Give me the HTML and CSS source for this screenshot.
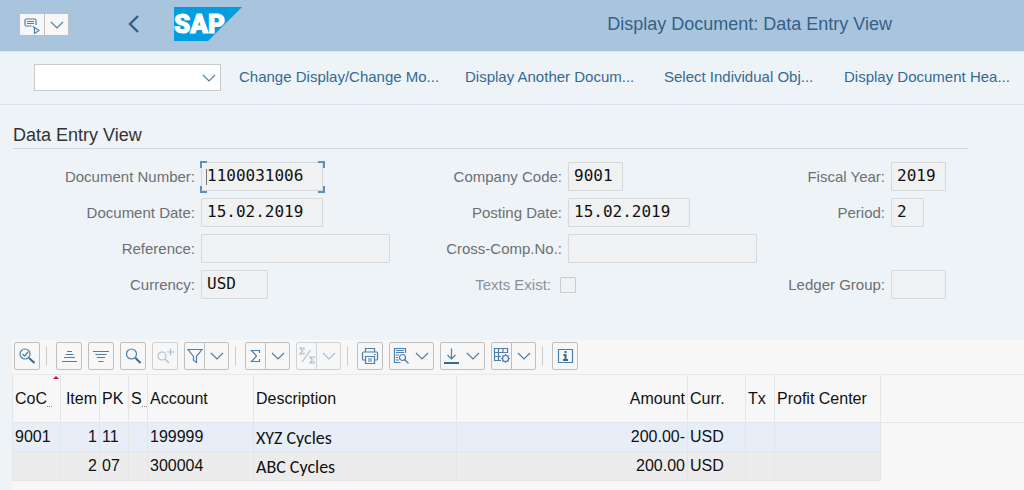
FILE: index.html
```html
<!DOCTYPE html>
<html lang="en">
<head>
<meta charset="utf-8">
<title>Display Document: Data Entry View</title>
<link rel="stylesheet" href="styles.css">
</head>
<body>
<svg class="defs" aria-hidden="true">
  <symbol id="chev" viewBox="0 0 14 8"><path d="M1 1l6 6 6-6"/></symbol>
</svg>

<header class="shell">
  <div class="split split-menu">
    <button type="button" aria-label="Menu">
      <svg width="20" height="20" viewBox="0 0 20 20"><path d="M9.500 11H4.500a1.500 1.500 0 0 1-1.500-1.500v-4A1.500 1.500 0 0 1 4.500 4h8A1.500 1.500 0 0 1 14 5.500v4.500M5 6.500h7M5 8.500h7M11 11l1.500 2.500M12.500 12.500v6l4.500-3z"/></svg>
    </button>
    <button type="button" aria-label="More"><svg width="14" height="8"><use href="#chev"/></svg></button>
  </div>
  <button type="button" class="back" aria-label="Back">
    <svg width="12" height="18" viewBox="0 0 12 18"><path d="M10 1L2 9l8 8"/></svg>
  </button>
  <svg class="logo" width="68" height="34" viewBox="0 0 68 34" role="img" aria-label="SAP">
    <path d="M0 0h68L34 34H0z"/>
    <text x="0" y="26">SAP</text>
  </svg>
  <h1>Display Document: Data Entry View</h1>
</header>

<nav class="actions">
  <div class="command">
    <select aria-label="Command"><option></option></select>
    <svg width="14" height="8"><use href="#chev"/></svg>
  </div>
  <div class="links">
    <button type="button">Change Display/Change Mo...</button>
    <button type="button">Display Another Docum...</button>
    <button type="button">Select Individual Obj...</button>
    <button type="button">Display Document Hea...</button>
  </div>
</nav>

<main>
  <section class="entry">
    <h2>Data Entry View</h2>
    <form class="fields">
      <label class="c1" for="docno">Document Number:</label>
      <span class="focus"><input id="docno" class="w-date" value="1100031006" readonly></span>
      <label for="cocode">Company Code:</label>
      <input id="cocode" class="w-code" value="9001" readonly>
      <label for="year">Fiscal Year:</label>
      <input id="year" class="w-code" value="2019" readonly>

      <label class="c1" for="docdate">Document Date:</label>
      <input id="docdate" class="w-date" value="15.02.2019" readonly>
      <label for="postdate">Posting Date:</label>
      <input id="postdate" class="w-date" value="15.02.2019" readonly>
      <label for="period">Period:</label>
      <input id="period" class="w-short" value="2" readonly>

      <label class="c1" for="ref">Reference:</label>
      <input id="ref" class="w-long" readonly>
      <label for="cross">Cross-Comp.No.:</label>
      <input id="cross" class="w-long" readonly>

      <label class="c1" for="curr">Currency:</label>
      <input id="curr" class="w-curr" value="USD" readonly>
      <label class="dim" for="texts">Texts Exist:</label>
      <input id="texts" type="checkbox" disabled>
      <label for="ledger">Ledger Group:</label>
      <input id="ledger" class="w-code" readonly>
    </form>
  </section>

  <section class="grid">
    <div class="tools" role="toolbar" aria-label="List tools">
      <button type="button" class="tool" aria-label="Details"><svg width="20" height="20" viewBox="0 0 20 20"><circle cx="8" cy="8" r="5"/><path d="M5.500 8l2 2 3.500-4"/><path class="thick" d="M12 12l5.500 5"/></svg></button>
      <span class="sep"></span>
      <button type="button" class="tool" aria-label="Sort ascending"><svg width="20" height="20" viewBox="0 0 20 20"><path d="M8 5.500h5M6.500 8.500h8M5 11.500h11M3 15.500h15"/></svg></button>
      <button type="button" class="tool" aria-label="Sort descending"><svg width="20" height="20" viewBox="0 0 20 20"><path d="M2 5.500h16M4.500 8.500h11M6 11.500h8M7.500 15.500h5"/></svg></button>
      <button type="button" class="tool" aria-label="Find"><svg width="20" height="20" viewBox="0 0 20 20"><circle cx="8.500" cy="8" r="5"/><path class="thick" d="M12.500 12l5 5"/></svg></button>
      <button type="button" class="tool off" aria-label="Find next" disabled><svg width="20" height="20" viewBox="0 0 20 20"><circle cx="7" cy="10" r="4"/><path d="M10 13l4 4M15.500 2.500v7M12 6h7"/></svg></button>
      <div class="split">
        <button type="button" aria-label="Filter"><svg width="18" height="20" viewBox="0 0 18 20"><path d="M2 3.500h14l-5.500 7v6l-3-2v-4z"/></svg></button>
        <button type="button" aria-label="Filter options"><svg width="14" height="8"><use href="#chev"/></svg></button>
      </div>
      <span class="sep"></span>
      <div class="split">
        <button type="button" aria-label="Total"><svg width="18" height="20" viewBox="0 0 18 20"><path d="M12.500 7V4.500h-8l5 5.500-5 5.500h8V13"/></svg></button>
        <button type="button" aria-label="Total options"><svg width="14" height="8"><use href="#chev"/></svg></button>
      </div>
      <div class="split off">
        <button type="button" aria-label="Subtotal" disabled><svg width="18" height="20" viewBox="0 0 18 20"><path d="M6 4V2H2l2.500 3L2 8h4V6.500M4 16L12.500 4M16 12.500V11h-4l2.500 3-2.500 3h4v-2"/></svg></button>
        <button type="button" aria-label="Subtotal options" disabled><svg width="14" height="8"><use href="#chev"/></svg></button>
      </div>
      <span class="sep"></span>
      <button type="button" class="tool" aria-label="Print"><svg width="20" height="20" viewBox="0 0 20 20"><path d="M5.500 6V2.500h9V6M5 14H3.500A1 1 0 0 1 2.500 13V7a1 1 0 0 1 1-1h13a1 1 0 0 1 1 1v6a1 1 0 0 1-1 1H15M5.500 10.500h9v7h-9zM8 13h4M8 15h4M14 8.500h1.500"/></svg></button>
      <div class="split joined">
        <button type="button" aria-label="Views"><svg width="18" height="20" viewBox="0 0 18 20"><path d="M14.500 7V2.500h-11v14h6M5 4.500h8M5 6.500h8M5 9h3M5 11.500h2M5 14h3"/><circle cx="11.500" cy="11.500" r="3"/><path d="M13.500 13.500l4 4"/></svg></button>
        <button type="button" aria-label="View options"><svg width="14" height="8"><use href="#chev"/></svg></button>
      </div>
      <div class="split joined">
        <button type="button" aria-label="Export"><svg width="18" height="20" viewBox="0 0 18 20"><path d="M9.500 2.500v10M5.500 9l4 4 4-4"/><path class="thick" d="M2 17h15"/></svg></button>
        <button type="button" aria-label="Export options"><svg width="14" height="8"><use href="#chev"/></svg></button>
      </div>
      <div class="split">
        <button type="button" aria-label="Layout"><svg width="18" height="20" viewBox="0 0 18 20"><path d="M8 14.500H1.500v-12h13V7M1.500 6.500h13M1.500 10.500H8M5.500 2.500v12M10 2.500v4"/><circle cx="12.500" cy="12.500" r="3"/><path d="M12.500 8v1.500M12.500 15.500V17M8 12.500h1.500M15.500 12.500H17M9.500 9.500l1 1M14.500 14.500l1 1M15.500 9.500l-1 1M10.500 14.500l-1 1"/></svg></button>
        <button type="button" aria-label="Layout options"><svg width="14" height="8"><use href="#chev"/></svg></button>
      </div>
      <span class="sep"></span>
      <button type="button" class="tool" aria-label="Information"><svg width="20" height="20" viewBox="0 0 20 20"><path d="M3.500 3.500h14v13h-14z"/><path class="thick" d="M9.500 6h2M8.500 9h2v5M8 14h5"/></svg></button>
    </div>

    <table>
      <colgroup>
        <col class="k-coc"><col class="k-item"><col class="k-pk"><col class="k-s"><col class="k-acc"><col class="k-desc"><col class="k-amt"><col class="k-cur"><col class="k-tx"><col class="k-pc"><col>
      </colgroup>
      <thead>
        <tr>
          <th class="sorted">CoC<span class="more"></span></th>
          <th class="num">Item</th>
          <th>PK</th>
          <th>S<span class="more"></span></th>
          <th>Account</th>
          <th>Description</th>
          <th class="num">Amount</th>
          <th>Curr.</th>
          <th>Tx</th>
          <th>Profit Center</th>
          <td class="rest"></td>
        </tr>
      </thead>
      <tbody>
        <tr class="first"><td>9001</td><td class="num">1</td><td>11</td><td></td><td>199999</td><td class="name">XYZ Cycles</td><td class="num">200.00-</td><td>USD</td><td></td><td></td><td class="rest"></td></tr>
        <tr class="second"><td></td><td class="num">2</td><td>07</td><td></td><td>300004</td><td class="name">ABC Cycles</td><td class="num">200.00</td><td>USD</td><td></td><td></td><td class="rest"></td></tr>
      </tbody>
    </table>
  </section>
</main>
</body>
</html>
```

FILE: styles.css
```css
* { box-sizing: border-box; }

body {
  margin: 0;
  min-height: 100vh;
  display: flex;
  flex-direction: column;
  background: #eef3f8;
  color: #111;
  font: 16px/20px "Liberation Sans", Arial, sans-serif;
}

.defs { display: none; }

svg {
  display: block;
  flex: none;
  fill: none;
  stroke: #4d7fab;
  stroke-width: 1.2;
}

button {
  padding: 0;
  border: 0;
  background: none;
  color: inherit;
  font: inherit;
}

h1, h2 { margin: 0; font-weight: 400; }

/* Shell bar */
.shell {
  display: flex;
  align-items: center;
  height: 52px;
  padding: 0 132px 4px 19px;
  background: #a9c5de;
  border-bottom: 1px solid #d8e6f2;
}

.back { margin-left: 59px; }
.back svg { stroke: #346187; stroke-width: 2.4; }

.logo { margin-left: 34px; }
.logo path { fill: #009de0; stroke: none; }
.logo text {
  fill: #fff;
  stroke: #fff;
  stroke-width: 1;
  font: 900 26px Roboto, sans-serif;
}

h1 {
  margin-left: auto;
  color: #346187;
  font-size: 18px;
  line-height: 24px;
}

/* Action bar */
.actions {
  display: flex;
  align-items: center;
  height: 53px;
  padding: 0 8px 2px 34px;
  border-bottom: 1px solid #dae7f2;
}

.command { position: relative; }
.command select {
  display: block;
  width: 187px;
  height: 27px;
  border: 1px solid #c8cacc;
  border-radius: 0;
  background: #fff;
  appearance: none;
}
.command svg {
  position: absolute;
  right: 5px;
  top: 10px;
  pointer-events: none;
}

.links {
  flex: 1;
  display: grid;
  grid-template-columns: 226fr 199fr 180fr 172fr;
  margin-left: 18px;
}
.links button {
  color: #346a94;
  font-size: 15px;
  text-align: left;
  white-space: nowrap;
}

/* Header data */
main { flex: 1; display: flex; flex-direction: column; }

.entry { padding: 18px 0 41px 13px; }

h2 {
  margin-right: 56px;
  padding-bottom: 1px;
  border-bottom: 1px solid #d3d6d9;
  color: #333;
  font-size: 18px;
  line-height: 24px;
}

.fields {
  display: grid;
  grid-template-columns: 182fr 190px 165fr 190px 121fr 56px;
  grid-auto-rows: 29px;
  gap: 7px 6px;
  align-items: center;
  margin: 13px 77px 0 0;
}
.fields label { color: #6d6f71; font-size: 15px; text-align: right; }
.fields .c1 { grid-column: 1; }
.fields .dim { color: #8d9195; padding-right: 11px; }

.fields input {
  height: 29px;
  margin: 0;
  padding: 0 5px 2px;
  border: 1px solid #d6d8da;
  border-radius: 1px;
  background: #f0f1f2;
  color: #111;
  font: 16px/20px "DejaVu Sans Mono", monospace;
}
.fields .w-date { width: 122px; }
.fields .w-code { width: 55px; }
.fields .w-short { width: 33px; }
.fields .w-long { width: 189px; }
.fields .w-curr { width: 67px; }
.fields input[type="checkbox"] {
  width: 16px;
  height: 16px;
  margin-left: -8px;
  padding: 0;
  border-color: #c9cbcd;
  appearance: none;
}

.focus { position: relative; justify-self: start; display: flex; }
.focus::before {
  content: "";
  position: absolute;
  inset: -1px -2px -2px -1px;
  --c: linear-gradient(#5b90bf, #5b90bf);
  background:
    var(--c) 0 0 / 7px 2px, var(--c) 0 0 / 2px 7px,
    var(--c) 100% 0 / 7px 2px, var(--c) 100% 0 / 2px 7px,
    var(--c) 0 100% / 7px 2px, var(--c) 0 100% / 2px 7px,
    var(--c) 100% 100% / 7px 2px, var(--c) 100% 100% / 2px 7px;
  background-repeat: no-repeat;
}
.focus::after {
  content: "";
  position: absolute;
  left: 5px;
  top: 7px;
  width: 1px;
  height: 16px;
  background: #777;
}

/* Item list */
.grid {
  flex: 1;
  margin-left: 12px;
  background: #f7f7f7;
}

.tools {
  display: flex;
  align-items: center;
  gap: 6px;
  height: 35px;
  padding: 0 2px 3px;
  border-bottom: 1px solid #e8e8e8;
}

.tool, .split {
  display: flex;
  height: 28px;
  border: 1px solid #bfbfbf;
  border-radius: 2px;
  background: #f7f7f7;
}
.tool { width: 26px; align-items: center; justify-content: center; }
.split { width: 45px; }
.split button {
  flex: 1;
  display: flex;
  align-items: center;
  justify-content: center;
}
.split button:first-child {
  flex: none;
  width: 20px;
  border-right: 1px solid #bfbfbf;
}
.split.joined button:first-child { border-right-color: transparent; }
.split.split-menu { width: 50px; height: 23px; border-radius: 1px; margin-top: 2px; }
.split.split-menu button:first-child { width: 25px; }

.thick { stroke: #346a94; stroke-width: 2; }
.off svg { stroke: #a9bfd3; }
.tool.off, .split.off { border-color: #d0d0d0; }
.split.off button:first-child { border-color: #d0d0d0; }

.sep { width: 4px; height: 20px; border-left: 1px solid #ccc; }

table {
  width: 100%;
  table-layout: fixed;
  border-collapse: separate;
  border-spacing: 0;
}
.k-coc { width: 49px; }
.k-item { width: 39px; }
.k-pk { width: 29px; }
.k-s { width: 19px; }
.k-acc { width: 106px; }
.k-desc { width: 203px; }
.k-amt { width: 231px; }
.k-cur { width: 58px; }
.k-tx { width: 29px; }
.k-pc { width: 106px; }

th, td {
  height: 29px;
  padding: 0 2px;
  border-right: 1px solid #e3e5e7;
  border-bottom: 1px solid #e3e5e7;
  text-align: left;
  font-weight: 400;
  white-space: nowrap;
}
th { height: 48px; }
th:first-child, td:first-child { border-left: 1px solid #e3e5e7; }
.num { text-align: right; }
.name { padding-top: 2px; font: 18px/20px Carlito, Lato, sans-serif; }
.first td { background: #e7eef7; }
.second td { background: #ececec; }
thead .rest { border-right: 0; }
tbody .rest { border: 0; background: none; }

.sorted { position: relative; }
.sorted::after {
  content: "";
  position: absolute;
  right: 1px;
  top: 1px;
  border: 3px solid transparent;
  border-top: 0;
  border-bottom-color: #c8102e;
}
.more {
  display: inline-block;
  width: 5px;
  margin-bottom: -3px;
  border-bottom: 1px dotted #888;
}
```
